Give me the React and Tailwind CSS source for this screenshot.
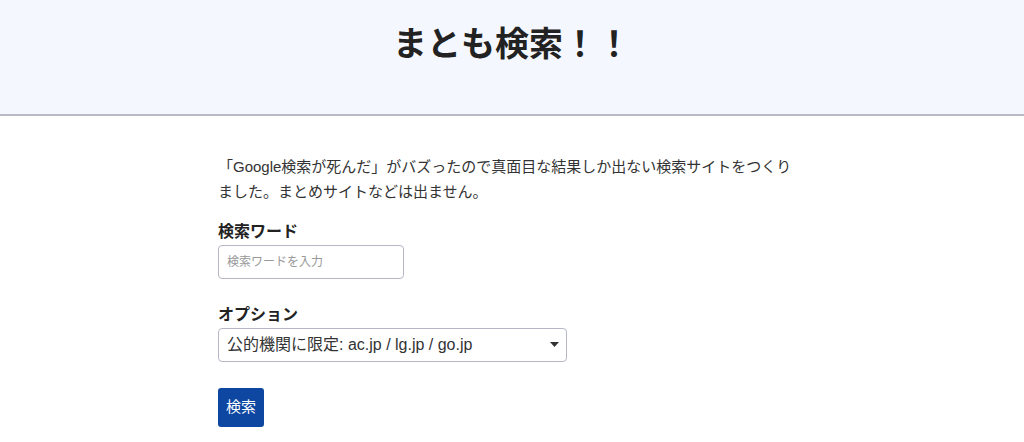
const App = () => {
  return (
    <div
      className="min-h-screen bg-white text-[#222]"
      style={{ fontFamily: '"Liberation Sans", "Noto Sans CJK JP", sans-serif' }}
    >
      <header className="h-[116px] bg-[#f4f7fd] border-b-2 border-[#b9bcc7] flex justify-center">
        <h1 className="mt-[22px] text-[34px] font-bold leading-[44px]">
          まとも検索！！
        </h1>
      </header>

      <main className="w-[588px] mx-auto pt-[38px]">
        <p className="text-[15px] leading-[25px] text-[#333]">
          「Google検索が死んだ」がバズったので真面目な結果しか出ない検索サイトをつくりました。まとめサイトなどは出ません。
        </p>

        <div className="mt-[16px]">
          <label htmlFor="word" className="block text-[16px] font-bold leading-[24px]">
            検索ワード
          </label>
          <input
            id="word"
            type="text"
            placeholder="検索ワードを入力"
            className="mt-[1px] w-[186px] h-[34px] px-[8px] text-[12px] border border-[#b5b8c4] rounded-[4px] placeholder:text-[#999] focus:outline-none"
          />
        </div>

        <div className="mt-[24px]">
          <label htmlFor="option" className="block text-[16px] font-bold leading-[24px]">
            オプション
          </label>
          <div className="relative mt-[1px] w-[349px]">
            <select
              id="option"
              className="appearance-none w-full h-[34px] pl-[8px] pr-[28px] text-[16px] text-[#333] bg-white border border-[#b5b8c4] rounded-[4px] focus:outline-none"
            >
              <option>公的機関に限定: ac.jp / lg.jp / go.jp</option>
            </select>
            <svg
              className="absolute right-[8px] top-[14px] pointer-events-none"
              width="9"
              height="5"
              viewBox="0 0 9 5"
            >
              <path d="M0 0h9L4.5 5z" fill="#333" />
            </svg>
          </div>
        </div>

        <button className="mt-[26px] w-[46px] h-[39px] bg-[#0d47a1] text-white text-[15px] rounded-[3px]">
          検索
        </button>
      </main>
    </div>
  );
};

export default App;
